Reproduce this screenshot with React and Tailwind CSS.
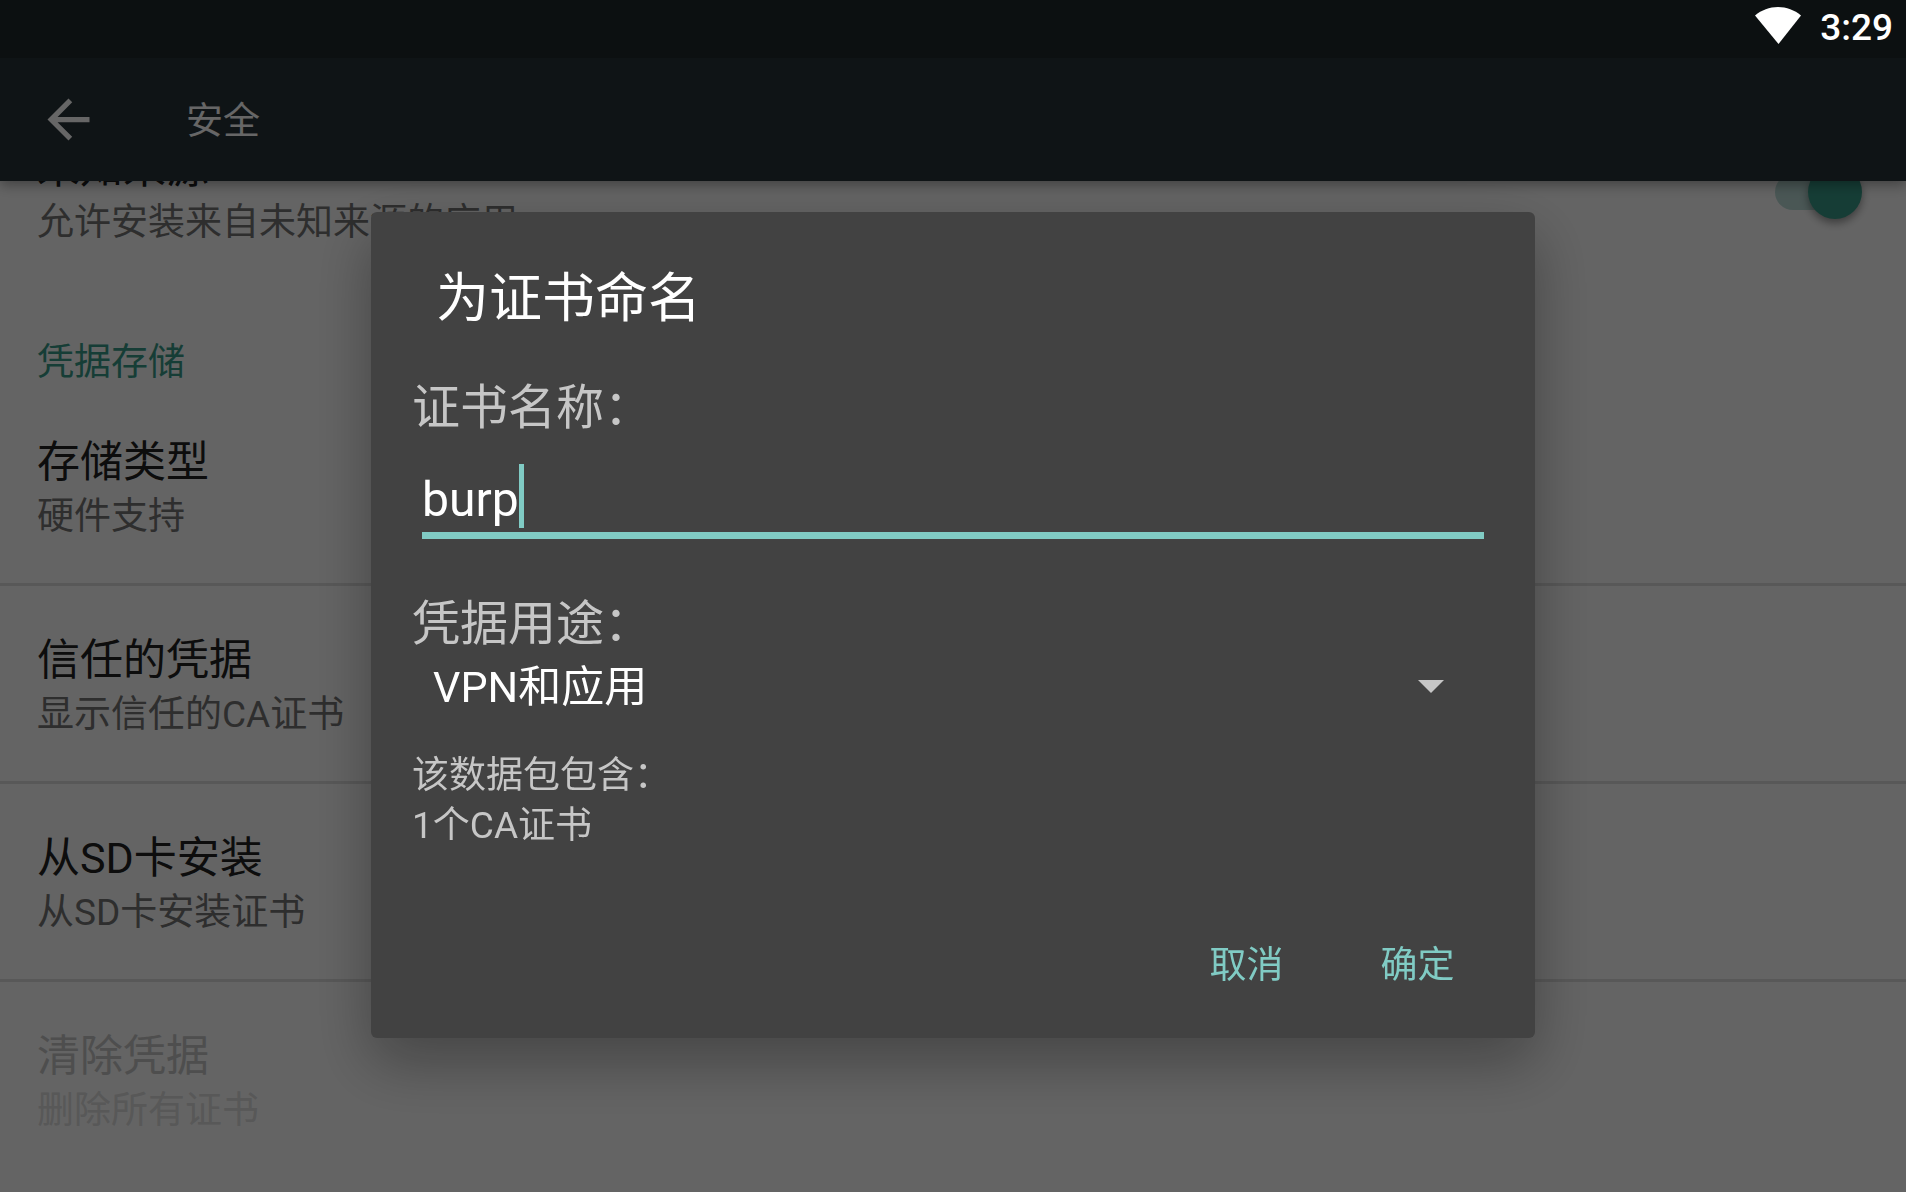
import { useState } from 'react';

const credentialItems = [
  { title: '存储类型', summary: '硬件支持' },
  { title: '信任的凭据', summary: '显示信任的CA证书' },
  { title: '从SD卡安装', summary: '从SD卡安装证书' },
  { title: '清除凭据', summary: '删除所有证书', disabled: true },
];

function StatusBar() {
  return (
    <div className="relative z-30 flex h-[58px] shrink-0 items-start justify-end gap-[19px] bg-[#0c1011] pr-[13px] text-white">
      <svg viewBox="0 0 46 37" className="mt-[7px] h-[37px] w-[46px]" fill="currentColor" aria-hidden="true">
        <path d="M0 8.5C6.5 3 14.5 0 23 0s16.500 3 23 8.500L23.500 37z" />
      </svg>
      <time className="mt-[6px] text-[37px] leading-[44px] font-medium">3:29</time>
    </div>
  );
}

function AppBar() {
  return (
    <header className="relative z-10 flex h-[123px] shrink-0 items-center gap-[86px] bg-[#263238] pl-[37px] text-white shadow-[0_4px_12px_rgba(0,0,0,0.35)]">
      <button type="button" aria-label="返回">
        <svg viewBox="0 0 24 24" className="h-[63px] w-[63px]" fill="currentColor" aria-hidden="true">
          <path d="M20 11H7.830l5.590-5.590L12 4l-8 8 8 8 1.410-1.410L7.830 13H20v-2z" />
        </svg>
      </button>
      <h1 className="pt-[4px] text-[37px] leading-[52px]">安全</h1>
    </header>
  );
}

function PreferenceItem({ title, summary, disabled }) {
  return (
    <li className="border-b-[3px] border-[#dcdcdc] last:border-transparent">
      <button
        type="button"
        disabled={disabled}
        className="block w-full px-[37px] pt-[45px] pb-[40px] text-left text-[#212121] disabled:text-[#c3c3c3]"
      >
        <span className="block text-[43px] leading-[58px]">{title}</span>
        <span className={`block text-[37px] leading-[52px] ${disabled ? 'text-[#dbdbdb]' : 'text-[#737373]'}`}>
          {summary}
        </span>
      </button>
    </li>
  );
}

function UnknownSources() {
  const [enabled, setEnabled] = useState(true);

  return (
    <label className="flex h-[197px] items-center justify-between pr-[44px] pl-[37px]">
      <span className="block pt-[4px]">
        <span className="block text-[43px] leading-[58px] text-[#212121]">未知来源</span>
        <span className="block text-[37px] leading-[52px] text-[#737373]">允许安装来自未知来源的应用</span>
      </span>
      <span className="relative flex h-[54px] w-[87px] items-center">
        <input
          type="checkbox"
          role="switch"
          checked={enabled}
          onChange={(e) => setEnabled(e.target.checked)}
          className="peer h-[36px] w-[80px] appearance-none rounded-full bg-[#bdbdbd] checked:bg-[#b9d9d5]"
        />
        <span className="absolute top-0 left-0 size-[54px] rounded-full bg-white shadow-[0_4px_8px_rgba(0,0,0,0.4)] peer-checked:left-[33px] peer-checked:bg-[#379a87]" />
      </span>
    </label>
  );
}

function NameDialog() {
  const [name, setName] = useState('burp');

  return (
    <div className="fixed inset-0 z-20 flex items-center justify-center bg-black/60 pt-[58px]">
      <form
        role="dialog"
        aria-labelledby="dialog-title"
        onSubmit={(e) => e.preventDefault()}
        className="w-full max-w-[1164px] rounded-[6px] bg-[#424242] px-[41px] pt-[56px] pb-[18px] text-[#c6c6c6] shadow-[0_24px_60px_rgba(0,0,0,0.32)]"
      >
        <h2 id="dialog-title" className="pl-[24px] text-[53px] leading-[62px] text-white">
          为证书命名
        </h2>

        <label htmlFor="cert-name" className="mt-[50px] block text-[48px] leading-[56px]">
          证书名称：
        </label>
        <div className="mx-[10px] mt-[28px] flex border-b-[7px] border-[#80cbc4] pb-[4px]">
          <input
            id="cert-name"
            type="text"
            value={name}
            onChange={(e) => setName(e.target.value)}
            className="h-[64px] max-w-full pt-[6px] text-[48px] leading-[58px] text-white caret-transparent outline-none [field-sizing:content]"
          />
          <span className="h-[64px] w-[5px] bg-[#80cbc4]" />
        </div>

        <label htmlFor="cert-usage" className="mt-[57px] block text-[48px] leading-[56px]">
          凭据用途：
        </label>
        <div className="relative">
          <select
            id="cert-usage"
            defaultValue="vpn"
            className="block h-[70px] w-full appearance-none bg-transparent pl-[21px] text-[43px] leading-[58px] text-white outline-none"
          >
            <option value="vpn">VPN和应用</option>
            <option value="wlan">WLAN</option>
          </select>
          <svg
            viewBox="0 0 26 13"
            className="pointer-events-none absolute top-[28px] right-[50px] h-[13px] w-[26px]"
            fill="currentColor"
            aria-hidden="true"
          >
            <path d="M0 0h26L13 13z" />
          </svg>
        </div>

        <p className="mt-[29px] text-[37px] leading-[50px]">
          该数据包包含：
          <br />
          1个CA证书
        </p>

        <div className="mt-[61px] -mr-[9px] flex justify-end text-[37px] leading-[52px] text-[#80cbc4]">
          <button type="button" className="h-[108px] w-[171px]">
            取消
          </button>
          <button type="submit" className="h-[108px] w-[171px]">
            确定
          </button>
        </div>
      </form>
    </div>
  );
}

export default function App() {
  return (
    <div
      lang="zh-CN"
      className="flex h-screen flex-col overflow-hidden bg-[#fafafa] font-['Roboto','Noto_Sans_CJK_SC',sans-serif]"
    >
      <StatusBar />
      <AppBar />
      <main className="min-h-0 flex-1 overflow-hidden">
        {/* list is scrolled part of the way down */}
        <div className="-mt-[88px]">
          <UnknownSources />
          <h2 className="px-[37px] pt-[48px] text-[37px] leading-[50px] text-[#379a87]">凭据存储</h2>
          <ul>
            {credentialItems.map((item) => (
              <PreferenceItem key={item.title} {...item} />
            ))}
          </ul>
        </div>
      </main>
      <NameDialog />
    </div>
  );
}
